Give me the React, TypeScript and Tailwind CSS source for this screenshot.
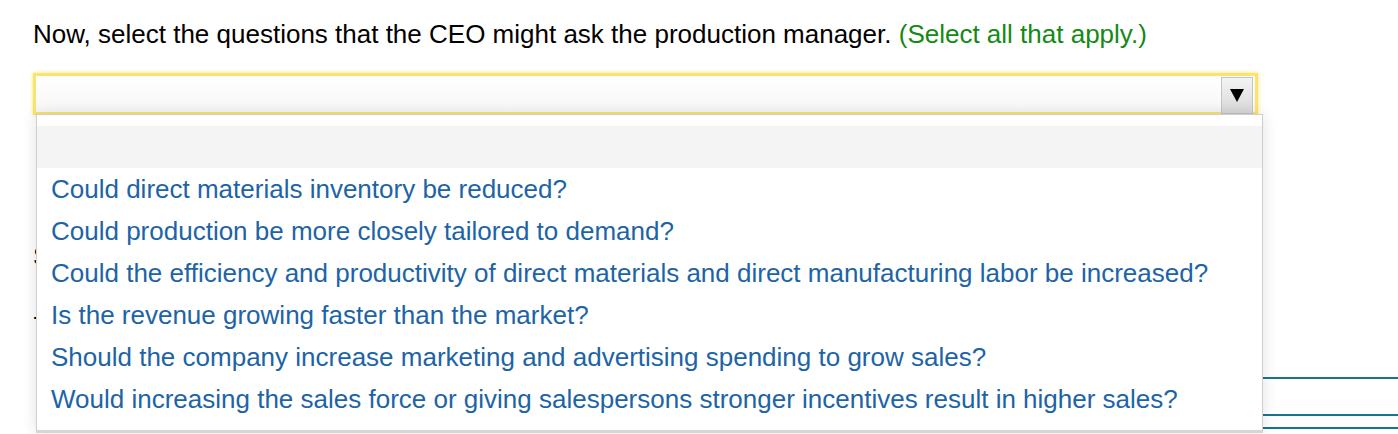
import React from "react";

const options = [
  "Could direct materials inventory be reduced?",
  "Could production be more closely tailored to demand?",
  "Could the efficiency and productivity of direct materials and direct manufacturing labor be increased?",
  "Is the revenue growing faster than the market?",
  "Should the company increase marketing and advertising spending to grow sales?",
  "Would increasing the sales force or giving salespersons stronger incentives result in higher sales?",
];

export default function App() {
  return (
    <div
      className="relative w-[1398px] h-[434px] overflow-hidden bg-white text-black"
      style={{ fontFamily: '"Liberation Sans", Arial, sans-serif' }}
    >
      <p className="pl-[33px] pt-[19px] text-[26px] leading-[30px] whitespace-nowrap">
        Now, select the questions that the CEO might ask the production manager.{" "}
        <span className="text-[#138a13]">(Select all that apply.)</span>
      </p>

      {/* closed select */}
      <div className="ml-[33px] mt-[24px] w-[1225px] h-[42px] border-[3px] border-[#fde36c] shadow-[0_0_4px_rgba(253,220,80,0.8)] bg-gradient-to-b from-white to-[#f7f7f7] flex justify-end items-start">
        <div className="mt-[1px] mr-[2px] w-[32px] h-[37px] border border-[#c4c4c4] bg-gradient-to-b from-[#f4f4f4] to-[#d8d8d8] flex items-center justify-center">
          <svg width="14" height="13" viewBox="0 0 14 13">
            <path d="M0 0 H14 L7 13 Z" fill="#000" />
          </svg>
        </div>
      </div>

      {/* content behind the open list */}
      <div className="pl-[33px] pt-[126px] text-[26px] leading-[30px]">S</div>
      <div className="pl-[33px] pt-[30px] text-[26px] leading-[30px]">-</div>
      <div className="mt-[46px] ml-[37px] h-[2px] bg-[#17748f]" />
      <div className="mt-[35px] ml-[37px] h-[2px] bg-[#17748f]" />
      <div className="mt-[11px] ml-[37px] h-[2px] bg-[#17748f]" />

      {/* open option list */}
      <div className="absolute left-[36px] top-[114px] w-[1227px] h-[319px] bg-white border border-[#cfcfcf] border-b-[3px] border-b-[#d6d6d6] shadow-[0_0_14px_rgba(0,0,0,0.12)] pt-[11px]">
        <div className="h-[42px] bg-[#f4f4f4]" />
        <ul>
          {options.map((o) => (
            <li
              key={o}
              className="h-[42px] pl-[14px] flex items-center text-[26px] text-[#1d64a6] whitespace-nowrap"
            >
              {o}
            </li>
          ))}
        </ul>
      </div>
    </div>
  );
}
